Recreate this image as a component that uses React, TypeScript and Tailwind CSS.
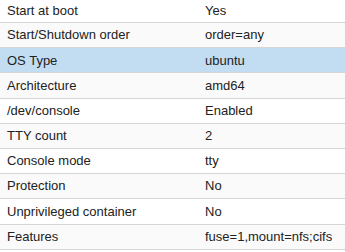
const rows: [string, string][] = [
  ["Start at boot", "Yes"],
  ["Start/Shutdown order", "order=any"],
  ["OS Type", "ubuntu"],
  ["Architecture", "amd64"],
  ["/dev/console", "Enabled"],
  ["TTY count", "2"],
  ["Console mode", "tty"],
  ["Protection", "No"],
  ["Unprivileged container", "No"],
  ["Features", "fuse=1,mount=nfs;cifs"],
];

export default function App() {
  return (
    <div
      className="w-[345px] h-[252px] overflow-hidden bg-white text-[13px] text-[#222]"
      style={{ fontFamily: '"Liberation Sans", Arial, sans-serif' }}
    >
      {rows.map(([name, value], i) => (
        <div
          key={name}
          className={`flex items-center border-b border-[#d6d6d6] ${
            i === 0 ? "h-[23px] pb-[1px]" : "h-[25.2px]"
          } ${i === 2 ? "bg-[#c2ddf2]" : i % 2 === 1 ? "bg-[#fafafa]" : "bg-white"}`}
        >
          <div className="w-[198px] pl-[7px] truncate">{name}</div>
          <div className="flex-1 pl-[7px] truncate">{value}</div>
        </div>
      ))}
    </div>
  );
}
